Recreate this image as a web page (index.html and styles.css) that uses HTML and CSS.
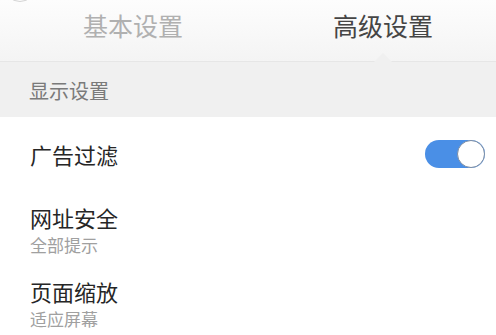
FILE: index.html
```html
<!DOCTYPE html>
<html lang="zh-CN">
<head>
<meta charset="utf-8">
<link rel="stylesheet" href="styles.css">
</head>
<body>
<div class="page">
  <span class="back-circle"></span>
  <header class="tabs">
    <div class="tab">基本设置</div>
    <div class="tab active">高级设置<span class="notch"></span></div>
  </header>
  <div class="section">显示设置</div>
  <div class="row row-single">
    <span class="title">广告过滤</span>
    <span class="toggle"><span class="knob"></span></span>
  </div>
  <div class="row row-double">
    <div class="title">网址安全</div>
    <div class="sub">全部提示</div>
  </div>
  <div class="row row-double">
    <div class="title">页面缩放</div>
    <div class="sub">适应屏幕</div>
  </div>
</div>
</body>
</html>
```
FILE: styles.css
```css
html, body {
  margin: 0;
  padding: 0;
  background: #ffffff;
}
body {
  font-family: "Noto Sans CJK SC", "Noto Sans", sans-serif;
  width: 496px;
  height: 335px;
  overflow: hidden;
}
.page {
  position: relative;
  height: 335px;
  overflow: hidden;
}
.back-circle {
  position: absolute;
  left: 4px;
  top: -30px;
  width: 32px;
  height: 32px;
  border-radius: 50%;
  border: 1.5px solid #d4d4d4;
  box-sizing: border-box;
}
.tabs {
  display: flex;
  height: 62px;
  padding: 0 0 10px 8px;
  box-sizing: border-box;
  background: linear-gradient(#fdfdfd, #f4f4f4);
  border-bottom: 1px solid #e6e6e6;
}
.tab {
  position: relative;
  flex: 0 0 250px;
  display: flex;
  align-items: center;
  justify-content: center;
  font-size: 25px;
  color: #b0b0b0;
  line-height: 1;
}
.tab.active {
  color: #454545;
}
.notch {
  position: absolute;
  left: 116px;
  bottom: -11px;
  width: 0;
  height: 0;
  border-left: 9px solid transparent;
  border-right: 9px solid transparent;
  border-bottom: 9px solid #f0f0f0;
}
.section {
  height: 55px;
  box-sizing: border-box;
  padding: 2px 0 0 29px;
  display: flex;
  align-items: center;
  background: #f0f0f0;
  font-size: 20px;
  color: #7a7a7a;
}
.row {
  background: #ffffff;
  padding: 0 11px 0 30px;
}
.row-single {
  height: 74px;
  display: flex;
  align-items: center;
  justify-content: space-between;
}
.row-double {
  padding-top: 12px;
  padding-bottom: 8px;
}
.title {
  font-size: 22px;
  line-height: 28px;
  color: #262626;
}
.sub {
  margin-top: 2px;
  font-size: 17px;
  line-height: 24px;
  color: #a0a0a0;
}
.toggle {
  width: 60px;
  height: 28px;
  border-radius: 14px;
  background: #4a8fe6;
  display: flex;
  justify-content: flex-end;
}
.knob {
  width: 28px;
  height: 28px;
  border-radius: 50%;
  background: #ffffff;
  border: 1.5px solid #7d8da3;
  box-sizing: border-box;
}
```
